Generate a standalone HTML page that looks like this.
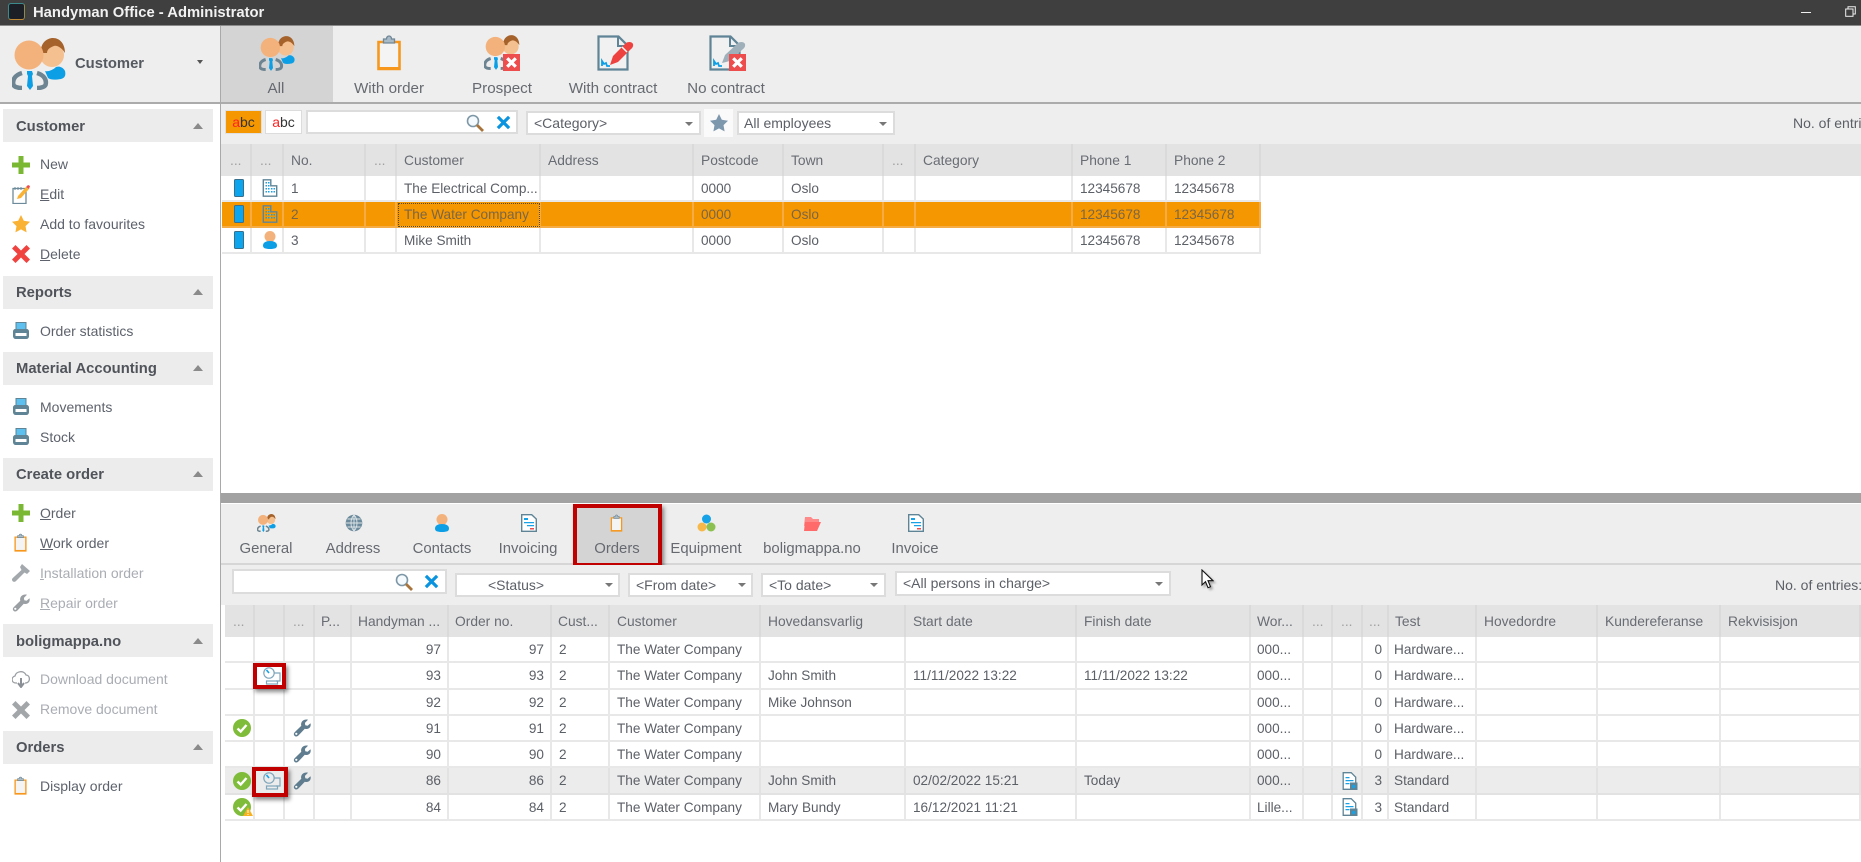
<!DOCTYPE html>
<html lang="en"><head><meta charset="utf-8"><title>Handyman Office - Administrator</title>
<style>
html,body{margin:0;padding:0;width:1861px;height:862px;overflow:hidden;background:#fff}
#p{position:relative;width:1861px;height:862px;overflow:hidden;font:14px/1 "Liberation Sans",sans-serif;color:#5b5f66;filter:blur(.35px);background:#fff}
#p div,#p svg,#p span.a,#p table{position:absolute}
.g{background:#eee}
.t{white-space:nowrap;line-height:18px;height:18px}
.tab{white-space:nowrap;line-height:18px;height:18px;text-align:center;width:110px;font-size:15.2px;color:#666a70}
.tb{font-size:14.9px}
.sec{left:3px;width:210px;height:33px;background:#ececec}
.sect{left:16px;font-weight:bold;color:#50545a;white-space:nowrap;line-height:18px;font-size:14.8px;margin-top:1px}
.arr{left:193px;width:0;height:0;border-left:5px solid transparent;border-right:5px solid transparent;border-bottom:6px solid #8a8a8a}
.it{left:40px;white-space:nowrap;line-height:18px;color:#5d626c}
.dis{color:#a9adb3}
.box{background:#fff;border:2px solid #dcdcdc;box-sizing:border-box}
.dd{width:0;height:0;border-left:4px solid transparent;border-right:4px solid transparent;border-top:4px solid #777}
table{border-collapse:separate;border-spacing:0;table-layout:fixed}
td,th{box-sizing:border-box;padding:1px 0 0 7px;font-weight:normal;text-align:left;white-space:nowrap;overflow:hidden;border-right:2px solid #e8e8e8;border-bottom:2px solid #e8e8e8;color:#5b5f66;font-size:13.6px}
th{background:#e3e3e3;border-right:2px solid #dadada;border-bottom:0;color:#686c73;font-size:13.8px}
th.d{color:#a0a0a0;padding-left:8px}
td.r{text-align:right;padding:1px 6px 0 0}
td.i{padding:0;position:relative}
td.i svg{left:calc(50% + 3px);top:50%;transform:translate(-50%,-50%)}
tr.s td{background:#f59700;border-color:#f6ac45;color:#7b6645}
tr.h td{background:#ececec;border-color:#e2e2e2}
td.f{outline:1px dotted #5a4a20;outline-offset:-2px}
.rb{border:4px solid #c00000;box-sizing:border-box;box-shadow:2px 3px 4px rgba(0,0,0,.45)}
</style></head><body><div id="p">
<svg width="0" height="0" style="left:0;top:0">
<defs>
<symbol id="ppl" viewBox="0 0 54 52">
<circle cx="40" cy="17" r="12" fill="#f4c08f"/><path d="M29 15C28 5 35 0 41 0c7 0 12 6 12 15-3-5-8-8-11-7-3 1-7 3-7 7z" fill="#a5622a"/>
<path d="M33 33c3 1 8-1 11-4 3-1 7 0 9 4 1 4 0 7-4 8-6 1-10 1-13-1z" fill="#0d9fe6"/>
<circle cx="17" cy="17" r="14.500" fill="#f3b27c"/>
<path d="M10 35C3 37 0 42 1.500 47c1 2 5 3 8.500 3M25 35c7 2 10 7 8.500 12-1 2-5 3-8.500 3" fill="none" stroke="#6d8592" stroke-width="4.500"/>
<path d="M15 33h5l1 3-1 2 1 10-3 4-3-4 1-10-1-2z" fill="#0d9fe6"/>
</symbol>
<symbol id="clip" viewBox="0 0 25 37">
<path d="M2 8h21v27H2z" fill="#f4f4f4" stroke="#f7981d" stroke-width="2.600"/><path d="M1 33h23v3H1z" fill="#f7981d"/>
<path d="M7 9V5h3c0-4 5-4 5 0h3v4z" fill="#a8bac5" stroke="#6f8796" stroke-width="1.300"/>
</symbol>
<symbol id="xb" viewBox="0 0 18 18"><rect width="18" height="18" fill="#ee4d4d"/><path d="M4.500 4.500l9 9M13.500 4.500l-9 9" stroke="#fff" stroke-width="3.400"/></symbol>
<symbol id="doc" viewBox="0 0 36 36">
<path d="M1.500 1.500h20l9 9v24h-29z" fill="#f1f1f1" stroke="#5f8496" stroke-width="2.200"/><path d="M21 2v9h9" fill="none" stroke="#5f8496" stroke-width="2"/>
<path d="M5 31v-5l2 3 2-1 1 3h3" fill="none" stroke="#0d9fe6" stroke-width="1.800"/>
</symbol>
<symbol id="plus" viewBox="0 0 18 18"><path d="M6.500 0h5v6.500H18v5h-6.500V18h-5v-6.500H0v-5h6.500z" fill="#7ab833"/></symbol>
<symbol id="star" viewBox="0 0 18 18"><path d="M9 0l2.800 5.800 6.200.9-4.500 4.400 1.100 6.300L9 14.400l-5.600 3 1.100-6.300L0 6.700l6.200-.9z" fill="currentColor"/></symbol>
<symbol id="x" viewBox="0 0 18 18"><path d="M3.500 0L9 5.500 14.500 0 18 3.500 12.500 9l5.500 5.500-3.500 3.500L9 12.500 3.500 18 0 14.500 5.500 9 0 3.500z" fill="currentColor"/></symbol>
<symbol id="prn" viewBox="0 0 18 18"><rect x="4" y="0.500" width="10" height="9" fill="#5dc0ef" stroke="#5f8496"/><path d="M1 14V9.500C1 8 2 7 3.500 7h11C16 7 17 8 17 9.500V14c0 1.500-1 3-2.500 3h-11C2 17 1 15.500 1 14z" fill="#5f8496"/><rect x="3.500" y="11" width="11" height="3" fill="#fff"/></symbol>
<symbol id="wr" viewBox="0 0 18 18"><path d="M17.500 4.200c.6 2.300-.1 4.300-2 5.300-1.300.7-2.600.6-3.700.2L5.400 16.500c-1.200 1.300-3.100 1.300-4 .1-.9-1-.7-2.500.4-3.500l6.500-6.300c-.5-1.500-.2-3.200 1-4.700C11 .6 13 .1 15 .7L11.900 3.900l.4 2.400 2.300.5z" fill="currentColor"/><circle cx="3.300" cy="14.800" r="1.100" fill="#fff"/></symbol>
<symbol id="ham" viewBox="0 0 18 18"><path d="M10 0l8 7-3 3-2.500-1.500L4 17c-1 1.200-2.800 1-3.500 0-.8-.9-.6-2.200.3-3L9.500 6 8 3z" fill="#a3a8ac"/></symbol>
<symbol id="phone" viewBox="0 0 10 18"><rect x=".5" y=".5" width="9" height="17" rx="1" fill="#0ea5ef" stroke="#38708c"/></symbol>
<symbol id="bld" viewBox="0 0 15 18"><path d="M.8 17.200V.8h7.500v6h5.900v10.400z" fill="none" stroke="#5f8496" stroke-width="1.400"/><path d="M3 3h1.500v1.500H3zm2.500 0H7v1.500H5.500zM3 6h1.500v1.500H3zm2.500 0H7v1.500H5.500zM3 9h1.500v1.500H3zm2.500 0H7v1.500H5.500zm3 0H10v1.500H8.500zm2.500 0h1.500v1.500H11zM3 12h1.500v1.500H3zm2.500 0H7v1.500H5.500zm3 0H10v1.500H8.500zm2.500 0h1.500v1.500H11z" fill="#17a2e8"/></symbol>
<symbol id="per" viewBox="0 0 14 18"><circle cx="7" cy="5.500" r="5.500" fill="#f3b27c"/><path d="M0 14.500c0-3 3-4.500 7-4.500s7 1.500 7 4.500c0 2.500-2 3.500-7 3.500s-7-1-7-3.500z" fill="#0d9fe6"/></symbol>
<symbol id="chk" viewBox="0 0 18 18"><circle cx="9" cy="9" r="9" fill="#7fbc3a"/><path d="M4.500 9.500l3.200 3L13.500 6" fill="none" stroke="#fff" stroke-width="2.400"/></symbol>
<symbol id="dev" viewBox="0 0 18 18"><circle cx="6" cy="6" r="5.200" fill="none" stroke="#7fa6bb" stroke-width="1.200"/><path d="M6 6L3.500 3" stroke="#17a2e8" stroke-width="1.600"/><path d="M11 6h6v8h-4" fill="none" stroke="#7fa6bb" stroke-width="1.200"/><rect x="3.500" y="14" width="11" height="3" fill="none" stroke="#7fa6bb" stroke-width="1.200"/></symbol>
<symbol id="fdoc" viewBox="0 0 15 18"><path d="M.7.700h8l4.500 4.500v12.100H.700z" fill="#fff" stroke="#5f8496" stroke-width="1.300"/><path d="M3 5h4v1.200H3zm0 3h8v1.200H3zm0 3h4v1.200H3z" fill="#17a2e8"/><rect x="7.500" y="10.500" width="7.500" height="7.500" fill="#5f8496"/><circle cx="11.200" cy="14.500" r="1.700" fill="#17a2e8"/></symbol>
<symbol id="inv" viewBox="0 0 16 18"><path d="M.7.700h10L15.300 5v12.300H.700z" fill="#fff" stroke="#5f8496" stroke-width="1.400"/><path d="M3 4h4v2H3zm0 4h10v1.300H3zm3 3h7v1.300H6z" fill="#17a2e8"/><rect x="9" y="14" width="4" height="1.500" fill="#ee4d4d"/></symbol>
<symbol id="mag" viewBox="0 0 18 18"><circle cx="7" cy="7" r="5.500" fill="#f4fafd" stroke="#7d97a6" stroke-width="1.600"/><path d="M11 11l6 6" stroke="#a9743b" stroke-width="2.800"/></symbol>
<symbol id="bx" viewBox="0 0 16 16"><path d="M2 2l12 12M14 2L2 14" stroke="#0a94e0" stroke-width="3.400"/></symbol>
</defs></svg>

<!-- title -->
<div style="left:0;top:0;width:1861px;height:25px;background:#3f3f3f"></div>
<div style="left:0;top:25px;width:1861px;height:1px;background:#8a8a8a"></div>
<div style="left:8px;top:3px;width:15px;height:15px;background:#1c2026;border:1.500px solid #3d8a8c;border-bottom-color:#c08a35;border-right-color:#8c8a50;border-radius:3px"></div>
<div class="t" style="left:33px;top:4px;color:#f2f2f2;font-weight:bold;font-size:14.800px">Handyman Office - Administrator</div>
<div style="left:1801px;top:12px;width:10px;height:1px;background:#f0f0f0"></div>
<svg style="left:1845px;top:6px" width="11" height="11" viewBox="0 0 11 11"><path d="M3 3V.7h7.300V8H8" fill="none" stroke="#eee"/><rect x=".7" y="3" width="7.300" height="7.300" fill="none" stroke="#eee"/></svg>

<!-- top band -->
<div class="g" style="left:0;top:26px;width:1861px;height:76px"></div>
<div style="left:0;top:102px;width:1861px;height:1.500px;background:#ababab"></div>
<div style="left:221px;top:26px;width:112px;height:76px;background:#d4d4d4"></div>
<svg style="left:12px;top:38px" width="54" height="52"><use href="#ppl"/></svg>
<div class="t" style="left:75px;top:55px;font-weight:bold;color:#555960;font-size:14.800px">Customer</div>
<div class="dd" style="left:197px;top:60px;border-top-color:#555;border-left-width:3.500px;border-right-width:3.500px"></div>
<svg style="left:259px;top:36px" width="36" height="35"><use href="#ppl"/></svg>
<svg style="left:376px;top:34px" width="26" height="37"><use href="#clip"/></svg>
<svg style="left:484px;top:35px" width="36" height="35"><use href="#ppl"/></svg><svg style="left:503px;top:54px" width="17" height="17"><use href="#xb"/></svg>
<svg style="left:597px;top:35px" width="36" height="36"><use href="#doc"/></svg>
<svg style="left:609px;top:41px" width="25" height="26" viewBox="0 0 25 26"><path d="M1 24l3-9L17 2c2-1.500 6-1.500 7 1 .5 2-.5 4-2 5L9 21z" fill="#ee4240"/><path d="M13 6l5 5" stroke="#fff" stroke-width="1.400"/></svg>
<svg style="left:709px;top:35px" width="36" height="36"><use href="#doc"/></svg>
<svg style="left:721px;top:41px" width="25" height="24" viewBox="0 0 25 24"><path d="M1 22l3-8L17 2c2-1.500 6-1.500 7 1 .5 2-.5 4-2 5L9 20z" fill="#9fb0ba"/></svg>
<svg style="left:729px;top:54px" width="17" height="17"><use href="#xb"/></svg>
<div class="tab" style="left:221px;top:80px">All</div>
<div class="tab" style="left:334px;top:80px">With order</div>
<div class="tab" style="left:447px;top:80px">Prospect</div>
<div class="tab" style="left:558px;top:80px">With contract</div>
<div class="tab" style="left:671px;top:80px">No contract</div>

<!-- sidebar -->
<div style="left:219.500px;top:26px;width:1.500px;height:836px;background:#a9a9a9"></div>
<div class="sec" style="top:109px"></div><div class="sect" style="top:117px">Customer</div><div class="arr" style="top:123px"></div>
<div class="it" style="top:155px"><u style="text-decoration:none">New</u></div>
<div class="it" style="top:185px"><u>E</u>dit</div>
<div class="it" style="top:215px">Add to favourites</div>
<div class="it" style="top:245px"><u>D</u>elete</div>
<svg style="left:12px;top:156px" width="18" height="18"><use href="#plus"/></svg>
<svg style="left:12px;top:185px" width="18" height="19" viewBox="0 0 18 19"><path d="M1 3.500h13v15H1z" fill="#fff" stroke="#6d8a9a" stroke-width="1.300"/><path d="M3 2v3M6 2v3M9 2v3" stroke="#6d8a9a"/><path d="M5 14l1-3 8-9 3 2-8 9z" fill="#f9b233"/><path d="M14 2l3 2 1-3-2-1z" fill="#ee4d4d"/></svg>
<svg style="left:12px;top:215px;color:#f9b233" width="18" height="18"><use href="#star"/></svg>
<svg style="left:12px;top:245px;color:#f0433f" width="18" height="18"><use href="#x"/></svg>

<div class="sec" style="top:276px"></div><div class="sect" style="top:283px">Reports</div><div class="arr" style="top:289px"></div>
<div class="it" style="top:322px">Order statistics</div>
<svg style="left:12px;top:322px" width="18" height="18"><use href="#prn"/></svg>

<div class="sec" style="top:352px"></div><div class="sect" style="top:359px">Material Accounting</div><div class="arr" style="top:365px"></div>
<div class="it" style="top:398px">Movements</div><svg style="left:12px;top:398px" width="18" height="18"><use href="#prn"/></svg>
<div class="it" style="top:428px">Stock</div><svg style="left:12px;top:428px" width="18" height="18"><use href="#prn"/></svg>

<div class="sec" style="top:458px"></div><div class="sect" style="top:465px">Create order</div><div class="arr" style="top:471px"></div>
<div class="it" style="top:504px"><u>O</u>rder</div><svg style="left:12px;top:504px" width="18" height="18"><use href="#plus"/></svg>
<div class="it" style="top:534px"><u>W</u>ork order</div><svg style="left:14px;top:533px" width="13" height="19"><use href="#clip"/></svg>
<div class="it dis" style="top:564px"><u>I</u>nstallation order</div><svg style="left:12px;top:564px" width="18" height="18"><use href="#ham"/></svg>
<div class="it dis" style="top:594px"><u>R</u>epair order</div><svg style="left:12px;top:594px;color:#9a9fa3" width="18" height="18"><use href="#wr"/></svg>

<div class="sec" style="top:624px"></div><div class="sect" style="top:632px">boligmappa.no</div><div class="arr" style="top:638px"></div>
<div class="it dis" style="top:670px">Download document</div>
<svg style="left:12px;top:670px" width="18" height="18" viewBox="0 0 18 18"><path d="M5 13H4c-5 0-5-6-1-7 1-5 9-6 11-1 4 0 5 7 0 8h-1" fill="#fff" stroke="#9a9fa3" stroke-width="1.300"/><path d="M9 8v8m-3-3l3 4 3-4" fill="none" stroke="#8a9095" stroke-width="2"/></svg>
<div class="it dis" style="top:700px">Remove document</div>
<svg style="left:12px;top:701px;color:#a3a6a9" width="18" height="18"><use href="#x"/></svg>

<div class="sec" style="top:731px"></div><div class="sect" style="top:738px">Orders</div><div class="arr" style="top:744px"></div>
<div class="it" style="top:777px">Display order</div><svg style="left:14px;top:776px" width="13" height="19"><use href="#clip"/></svg>

<!-- top filter -->
<div class="g" style="left:221px;top:103.500px;width:1640px;height:41px"></div>
<div style="left:225px;top:110px;width:37px;height:24px;background:#f59700;border:1px solid #dfdfdf;box-sizing:border-box;text-align:center;line-height:22px;font-size:14px;color:#333"><span style="color:#f22">a</span>bc</div>
<div style="left:265px;top:110px;width:37px;height:24px;background:#fff;border:1px solid #dcdcdc;box-sizing:border-box;text-align:center;line-height:22px;font-size:14px;color:#333"><span style="color:#f22">a</span>bc</div>
<div class="box" style="left:306px;top:110px;width:212px;height:24px"></div>
<svg style="left:466px;top:114px" width="18" height="18"><use href="#mag"/></svg>
<svg style="left:496px;top:115px" width="15" height="15"><use href="#bx"/></svg>
<div class="box" style="left:526px;top:111px;width:175px;height:24px"></div>
<div class="t" style="left:534px;top:114px;font-size:14px">&lt;Category&gt;</div><div class="dd" style="left:685px;top:122px"></div>
<div style="left:704px;top:109px;width:29px;height:28px;background:#fafafa"></div>
<svg style="left:710px;top:114px;color:#7d97ad" width="18" height="18"><use href="#star"/></svg>
<div class="box" style="left:737px;top:111px;width:158px;height:24px"></div>
<div class="t" style="left:744px;top:114px">All employees</div><div class="dd" style="left:879px;top:122px"></div>
<div class="t" style="left:1793px;top:114px">No. of entries:</div>

<!-- top grid -->
<div style="left:221px;top:144px;width:1640px;height:32px;background:#e3e3e3"></div>
<table style="left:222px;top:144px;width:1039px"><colgroup><col style="width:30px"><col style="width:32px"><col style="width:82px"><col style="width:31px"><col style="width:144px"><col style="width:153px"><col style="width:90px"><col style="width:100px"><col style="width:32px"><col style="width:157px"><col style="width:94px"><col style="width:94px"></colgroup>
<tr style="height:32px"><th class="d">...</th><th class="d">...</th><th>No.</th><th class="d">...</th><th>Customer</th><th>Address</th><th>Postcode</th><th>Town</th><th class="d">...</th><th>Category</th><th>Phone 1</th><th>Phone 2</th></tr>
<tr style="height:26px"><td class="i"><svg width="10" height="18"><use href="#phone"/></svg></td><td class="i"><svg width="15" height="18"><use href="#bld"/></svg></td><td>1</td><td></td><td>The Electrical Comp...</td><td></td><td>0000</td><td>Oslo</td><td></td><td></td><td>12345678</td><td>12345678</td></tr>
<tr class="s" style="height:26px"><td class="i"><svg width="10" height="18"><use href="#phone"/></svg></td><td class="i"><svg width="15" height="18"><use href="#bld"/></svg></td><td>2</td><td></td><td class="f">The Water Company</td><td></td><td>0000</td><td>Oslo</td><td></td><td></td><td>12345678</td><td>12345678</td></tr>
<tr style="height:26px"><td class="i"><svg width="10" height="18"><use href="#phone"/></svg></td><td class="i"><svg width="14" height="18"><use href="#per"/></svg></td><td>3</td><td></td><td>Mike Smith</td><td></td><td>0000</td><td>Oslo</td><td></td><td></td><td>12345678</td><td>12345678</td></tr>
</table>

<!-- splitter -->
<div style="left:221px;top:493px;width:1640px;height:10px;background:#a2a2a2"></div>

<!-- bottom tabs -->
<div class="g" style="left:221px;top:504px;width:1640px;height:59px"></div>
<div style="left:221px;top:563px;width:1640px;height:1.500px;background:#d6d6d6"></div>
<div style="left:573px;top:504px;width:89px;height:63px;background:#d4d4d4"></div>
<svg style="left:257px;top:514px" width="19" height="18"><use href="#ppl"/></svg>
<svg style="left:345px;top:514px" width="18" height="18" viewBox="0 0 18 18"><circle cx="9" cy="9" r="8.300" fill="#6b8a9b"/><path d="M1 9h16M9 1v16M2.500 5h13M2.500 13h13M9 1C5 5 5 13 9 17M9 1c4 4 4 12 0 16" fill="none" stroke="#dfe6ea" stroke-width=".9"/></svg>
<svg style="left:435px;top:514px" width="14" height="18"><use href="#per"/></svg>
<svg style="left:521px;top:514px" width="16" height="18"><use href="#inv"/></svg>
<svg style="left:610px;top:514px" width="13" height="18"><use href="#clip"/></svg>
<svg style="left:697px;top:514px" width="19" height="18" viewBox="0 0 19 18"><circle cx="9.500" cy="5" r="4.500" fill="#17a2e8"/><circle cx="5" cy="13" r="4.500" fill="#f6b84a"/><circle cx="14" cy="13" r="4.500" fill="#8cc152"/></svg>
<svg style="left:803px;top:516px" width="18" height="15" viewBox="0 0 18 15"><path d="M1 10L2 1h6l2 2h6v4z" fill="#ff8a8a"/><path d="M2 6h16l-4 9H1z" fill="#ff6b6b"/></svg>
<svg style="left:908px;top:514px" width="16" height="18"><use href="#inv"/></svg>
<div class="tab tb" style="left:211px;top:540px">General</div>
<div class="tab tb" style="left:298px;top:540px">Address</div>
<div class="tab tb" style="left:387px;top:540px">Contacts</div>
<div class="tab tb" style="left:473px;top:540px">Invoicing</div>
<div class="tab tb" style="left:562px;top:540px">Orders</div>
<div class="tab tb" style="left:651px;top:540px">Equipment</div>
<div class="tab tb" style="left:757px;top:540px">boligmappa.no</div>
<div class="tab tb" style="left:860px;top:540px">Invoice</div>
<div class="rb" style="left:573px;top:504px;width:89px;height:63px"></div>

<!-- bottom filter -->
<div class="g" style="left:221px;top:565px;width:1640px;height:40px"></div>
<div class="box" style="left:232px;top:569px;width:215px;height:25px"></div>
<svg style="left:395px;top:573px" width="18" height="18"><use href="#mag"/></svg>
<svg style="left:424px;top:574px" width="15" height="15"><use href="#bx"/></svg>
<div class="box" style="left:455px;top:573px;width:165px;height:24px"></div><div class="t" style="left:488px;top:576px">&lt;Status&gt;</div><div class="dd" style="left:605px;top:583px"></div>
<div class="box" style="left:628px;top:573px;width:125px;height:24px"></div><div class="t" style="left:636px;top:576px">&lt;From date&gt;</div><div class="dd" style="left:738px;top:583px"></div>
<div class="box" style="left:761px;top:573px;width:125px;height:24px"></div><div class="t" style="left:769px;top:576px">&lt;To date&gt;</div><div class="dd" style="left:870px;top:583px"></div>
<div class="box" style="left:895px;top:571px;width:276px;height:25px"></div><div class="t" style="left:903px;top:574px">&lt;All persons in charge&gt;</div><div class="dd" style="left:1155px;top:582px"></div>
<div class="t" style="left:1775px;top:576px;font-size:14px">No. of entries:</div>
<svg style="left:1201px;top:569px;filter:drop-shadow(2px 2px 1px rgba(0,0,0,.3))" width="13" height="20" viewBox="0 0 13 20"><path d="M1 1v15l3.500-3.300 2.500 6 2.500-1-2.500-6H12z" fill="#fff" stroke="#111" stroke-width="1.100"/></svg>

<!-- bottom grid -->
<div style="left:225px;top:605px;width:1636px;height:32px;background:#e3e3e3"></div>
<table style="left:225px;top:605px;width:1636px"><colgroup><col style="width:30px"><col style="width:30px"><col style="width:30px"><col style="width:37px"><col style="width:97px"><col style="width:103px"><col style="width:58px"><col style="width:151px"><col style="width:145px"><col style="width:171px"><col style="width:174px"><col style="width:53px"><col style="width:29px"><col style="width:30px"><col style="width:26px"><col style="width:88px"><col style="width:121px"><col style="width:123px"><col style="width:140px"></colgroup>
<tr style="height:32px"><th class="d">...</th><th></th><th class="d">...</th><th style="padding-left:6px">P...</th><th style="padding-left:6px">Handyman ...</th><th style="padding-left:6px">Order no.</th><th style="padding-left:6px">Cust...</th><th>Customer</th><th>Hovedansvarlig</th><th>Start date</th><th>Finish date</th><th style="padding-left:6px">Wor...</th><th class="d">...</th><th class="d">...</th><th class="d" style="padding-left:6px">...</th><th style="padding-left:6px">Test</th><th>Hovedordre</th><th>Kundereferanse</th><th>Rekvisisjon</th></tr>
<tr style="height:26px"><td></td><td></td><td></td><td></td><td class="r">97</td><td class="r">97</td><td>2</td><td>The Water Company</td><td></td><td></td><td></td><td style="padding-left:6px">000...</td><td></td><td></td><td class="r" style="padding-right:5px">0</td><td style="padding-left:5px">Hardware...</td><td></td><td></td><td></td></tr>
<tr style="height:27px"><td></td><td class="i"><svg width="18" height="18"><use href="#dev"/></svg></td><td></td><td></td><td class="r">93</td><td class="r">93</td><td>2</td><td>The Water Company</td><td>John Smith</td><td>11/11/2022 13:22</td><td>11/11/2022 13:22</td><td style="padding-left:6px">000...</td><td></td><td></td><td class="r" style="padding-right:5px">0</td><td style="padding-left:5px">Hardware...</td><td></td><td></td><td></td></tr>
<tr style="height:26px"><td></td><td></td><td></td><td></td><td class="r">92</td><td class="r">92</td><td>2</td><td>The Water Company</td><td>Mike Johnson</td><td></td><td></td><td style="padding-left:6px">000...</td><td></td><td></td><td class="r" style="padding-right:5px">0</td><td style="padding-left:5px">Hardware...</td><td></td><td></td><td></td></tr>
<tr style="height:26px"><td class="i"><svg width="18" height="18"><use href="#chk"/></svg></td><td></td><td class="i" style="color:#5f7d8f"><svg width="18" height="18"><use href="#wr"/></svg></td><td></td><td class="r">91</td><td class="r">91</td><td>2</td><td>The Water Company</td><td></td><td></td><td></td><td style="padding-left:6px">000...</td><td></td><td></td><td class="r" style="padding-right:5px">0</td><td style="padding-left:5px">Hardware...</td><td></td><td></td><td></td></tr>
<tr style="height:26px"><td></td><td></td><td class="i" style="color:#5f7d8f"><svg width="18" height="18"><use href="#wr"/></svg></td><td></td><td class="r">90</td><td class="r">90</td><td>2</td><td>The Water Company</td><td></td><td></td><td></td><td style="padding-left:6px">000...</td><td></td><td></td><td class="r" style="padding-right:5px">0</td><td style="padding-left:5px">Hardware...</td><td></td><td></td><td></td></tr>
<tr class="h" style="height:27px"><td class="i"><svg width="18" height="18"><use href="#chk"/></svg></td><td class="i"><svg width="18" height="18"><use href="#dev"/></svg></td><td class="i" style="color:#5f7d8f"><svg width="18" height="18"><use href="#wr"/></svg></td><td></td><td class="r">86</td><td class="r">86</td><td>2</td><td>The Water Company</td><td>John Smith</td><td>02/02/2022 15:21</td><td>Today</td><td style="padding-left:6px">000...</td><td></td><td class="i"><svg width="15" height="18"><use href="#fdoc"/></svg></td><td class="r" style="padding-right:5px">3</td><td style="padding-left:5px">Standard</td><td></td><td></td><td></td></tr>
<tr style="height:26px"><td class="i"><svg width="18" height="18"><use href="#chk"/></svg></td><td></td><td></td><td></td><td class="r">84</td><td class="r">84</td><td>2</td><td>The Water Company</td><td>Mary Bundy</td><td>16/12/2021 11:21</td><td></td><td style="padding-left:6px">Lille...</td><td></td><td class="i"><svg width="15" height="18"><use href="#fdoc"/></svg></td><td class="r" style="padding-right:5px">3</td><td style="padding-left:5px">Standard</td><td></td><td></td><td></td></tr>
</table>
<svg style="left:243px;top:807px" width="10" height="9" viewBox="0 0 10 9"><path d="M5 0l5 9H0z" fill="#f6b221"/><path d="M5 3v3M5 7v1" stroke="#fff"/></svg>
<div class="rb" style="left:253px;top:663px;width:33px;height:26px"></div>
<div class="rb" style="left:252px;top:767px;width:36px;height:30px"></div>
</div></body></html>
